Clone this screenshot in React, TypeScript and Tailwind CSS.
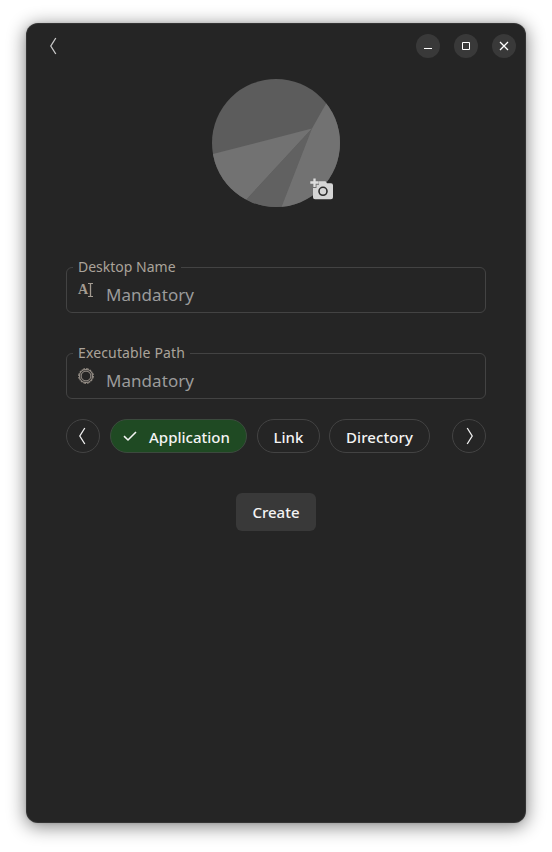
import type { ReactNode } from 'react';

function WindowButton({ children }: { children: ReactNode }) {
  return (
    <button className="flex size-6 items-center justify-center rounded-full bg-[#393939]">
      <svg width="24" height="24" viewBox="0 0 24 24" fill="none" stroke="#fff">
        {children}
      </svg>
    </button>
  );
}

function Avatar() {
  return (
    <div className="relative size-32">
      <svg width="128" height="128" viewBox="0 0 128 128">
        <defs>
          <clipPath id="disc">
            <circle cx="64" cy="64" r="64" />
          </clipPath>
        </defs>
        <g clipPath="url(#disc)">
          <rect width="128" height="128" fill="#5c5c5c" />
          <path d="M100 49.5 L0 75.3 V128 H27.5 Z" fill="#727272" />
          <path d="M100 49.5 L27.5 128 H69.5 Z" fill="#616161" />
          <path d="M100 49.5 L69.5 128 H128 V0 Z" fill="#727272" />
        </g>
      </svg>
      <svg className="absolute top-[99px] left-[98px]" width="24" height="23" viewBox="0 0 24 23">
        <path
          fill="#d5d5d5"
          d="M9 3.200 H15.500 L17 5.200 H21 Q23 5.200 23 7.200 V19.200 Q23 21.200 21 21.200 H5 Q3 21.200 3 19.200 V10 H6.500 V6.700 H9 Z"
        />
        <circle cx="13" cy="13.300" r="4" fill="none" stroke="#2b2b2b" strokeWidth="1.600" />
        <path d="M4.500 .5 V9 M.300 4.500 H8.700" stroke="#dedede" strokeWidth="2.300" />
      </svg>
    </div>
  );
}

function TextCursorIcon() {
  return (
    <span className="flex h-4 w-4 items-center font-['Liberation_Serif',serif] text-[14px] leading-4 font-bold text-[#a39b91]">
      <span className="w-[9px]">A</span>
      <svg className="shrink-0" width="7" height="16" viewBox="0 0 7 16" fill="none" stroke="#a39b91">
        <path d="M3.500 1.500 V14.500" strokeWidth="1.300" />
        <path d="M1 1.500 H6 M1 14.500 H6" />
      </svg>
    </span>
  );
}

function GearIcon() {
  return (
    <svg width="16" height="16" viewBox="0 0 16 16" fill="none" stroke="#aaa298">
      <circle cx="8" cy="8" r="7.300" strokeWidth="1" strokeDasharray="2.600 1.222" />
      <circle cx="8" cy="8" r="6.500" strokeWidth=".9" />
      <circle cx="8" cy="8" r="4.900" strokeWidth=".9" />
    </svg>
  );
}

function Field({ label, labelClass, icon }: { label: string; labelClass: string; icon: ReactNode }) {
  return (
    <fieldset className="h-14 w-full rounded-md border border-[#434343] pl-[11px]">
      <legend className={`-ml-[5px] h-5 px-[5px] text-sm leading-5 whitespace-nowrap text-[#aaa39a] ${labelClass}`}>
        {label}
      </legend>
      <div className="flex h-[35px] items-start">
        <span className="mt-[5px]">{icon}</span>
        <span className="mt-[6px] ml-3 text-[17px] leading-6 tracking-[.05px] text-[#9b9b9b]">Mandatory</span>
      </div>
    </fieldset>
  );
}

function Chevron({ right = false, color = '#f0f0f0' }: { right?: boolean; color?: string }) {
  return (
    <svg width="8" height="18" viewBox="0 0 8 18" fill="none" stroke={color} strokeWidth="1.300">
      <path d={right ? 'M1.200 1 L6.200 9 L1.200 17' : 'M6.800 1 L1.800 9 L6.800 17'} />
    </svg>
  );
}

export default function App() {
  return (
    <div className="flex h-[852px] w-[552px] justify-center bg-white pt-[23px] font-['Noto_Sans',sans-serif]">
      <main className="flex h-[800px] w-[500px] flex-col rounded-xl bg-[#252525] shadow-[0_3px_18px_1px_rgba(0,0,0,0.47),0_0_3px_rgba(0,0,0,0.12),inset_0_0_0_1px_rgba(255,255,255,0.07)]">
        <header className="flex h-[46px] items-center justify-between pr-[10px] pl-[23px]">
          <button aria-label="Back">
            <Chevron color="#c9c9c9" />
          </button>
          <div className="flex gap-[14px]">
            <WindowButton>
              <path d="M8 14.500 H16" />
            </WindowButton>
            <WindowButton>
              <path d="M8.500 8.500 H15.500 V15.500 H8.500 Z" />
            </WindowButton>
            <WindowButton>
              <path d="M8 8 L16 16 M16 8 L8 16" strokeWidth="1.300" />
            </WindowButton>
          </div>
        </header>
        <section className="flex flex-col items-center px-10 pt-[10px]">
          <Avatar />
          <div className="mt-[50px] flex w-full flex-col gap-[30px]">
            <Field label="Desktop Name" labelClass="tracking-normal" icon={<TextCursorIcon />} />
            <Field label="Executable Path" labelClass="tracking-[.14px]" icon={<GearIcon />} />
          </div>
          <div className="mt-5 flex h-[34px] w-full items-center text-[15px] font-medium text-[#f4f4f4]">
            <button className="flex size-[34px] items-center justify-center rounded-full border border-[#434343] pr-[2px]">
              <Chevron />
            </button>
            <button className="ml-[10px] flex h-[34px] w-[137px] items-center rounded-full border border-[#3c4a3e] bg-[#1f4a23] pt-[2px] pl-3">
              <svg className="-mt-[2px]" width="14" height="12" viewBox="0 0 14 12" fill="none" stroke="#f4f4f4" strokeWidth="1.600">
                <path d="M1 6.200 L5 10 L13 2" />
              </svg>
              <span className="ml-3 whitespace-nowrap">Application</span>
            </button>
            <button className="ml-[10px] h-[34px] w-[63px] rounded-full border border-[#434343] pt-[2px]">Link</button>
            <button className="ml-[9px] h-[34px] w-[101px] rounded-full border border-[#434343] pt-[2px] tracking-[.08px]">Directory</button>
            <button className="ml-auto flex size-[34px] items-center justify-center rounded-full border border-[#434343] pl-[2px]">
              <Chevron right />
            </button>
          </div>
          <button className="mt-10 h-[38px] w-20 rounded-md bg-[#393939] pt-px text-[15px] font-medium text-[#f4f4f4]">
            Create
          </button>
        </section>
      </main>
    </div>
  );
}
